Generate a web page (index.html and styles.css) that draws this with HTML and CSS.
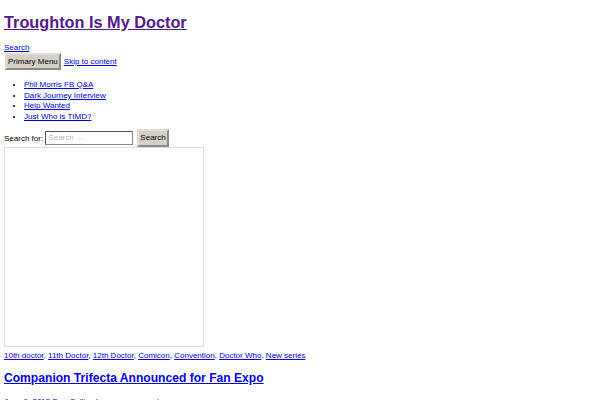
FILE: index.html
```html
<!DOCTYPE html>
<html lang="en">
<head>
    <meta charset="UTF-8">
    <meta name="viewport" content="width=device-width, initial-scale=1.0">
    <title>Troughton Is My Doctor</title>
    <link rel="stylesheet" href="styles.css">
</head>
<body>
    <div class="site">
        <header class="site-header">
            <h1 class="site-title"><a href="#" class="visited">Troughton Is My Doctor</a></h1>
            <div class="search-toggle"><a href="#">Search</a></div>
            <nav class="primary-nav">
                <div class="nav-bar">
                    <button class="menu-toggle">Primary Menu</button>
                    <a href="#" class="skip-link">Skip to content</a>
                </div>
                <ul class="nav-menu">
                    <li><a href="#">Phil Morris FB Q&amp;A</a></li>
                    <li><a href="#">Dark Journey Interview</a></li>
                    <li><a href="#">Help Wanted</a></li>
                    <li><a href="#">Just Who is TIMD?</a></li>
                </ul>
            </nav>
            <form class="search-form">
                <label>Search for: <input type="search" class="search-field" placeholder="Search …"></label>
                <button type="button" class="search-submit">Search</button>
            </form>
        </header>

        <div class="embed-frame"></div>

        <article class="post">
            <div class="tags">
                <a href="#">10th doctor</a>, <a href="#">11th Doctor</a>, <a href="#">12th Doctor</a>, <a href="#">Comicon</a>, <a href="#">Convention</a>, <a href="#">Doctor Who</a>, <a href="#">New series</a>
            </div>
            <h2 class="entry-title"><a href="#">Companion Trifecta Announced for Fan Expo</a></h2>
            <div class="entry-meta">
                <a href="#">June 9, 2015</a> <a href="#">Dan Collins</a> <a href="#">Leave a comment</a>
            </div>
        </article>
    </div>
</body>
</html>
```

FILE: styles.css
```css
body {margin: 4px; font-family: "Liberation Sans", Arial, sans-serif; font-size: 8px; color: #000; background: #fff;}
a {color: #0000ee;}
a.visited {color: #551a8b;}

.site-title {font-size: 16.3px; margin: 8.7px 0 10.7px;}
.search-toggle {line-height: 9.2px; margin-top: 11px;}

.nav-bar {display: flex; align-items: center; gap: 3px; margin-top: 1px;}
.menu-toggle {font-family: inherit; font-size: 8px; height: 17px; padding: 0 1px; margin-left: 1px; background: #d4d0c8; border: 2px outset #e0ddd6; color: #000;}
.nav-menu {margin: 10px 0 6px; padding-left: 20px; line-height: 10.7px;}

.search-form {display: flex; align-items: center; gap: 4px; margin-top: 6px;}
.search-field {box-sizing: border-box; font-family: inherit; font-size: 8px; width: 88px; height: 14px; padding: 1px 2px; border: 1px solid #888; border-top-color: #555; border-left-color: #555;}
.search-field::placeholder {color: #bbb;}
.search-submit {font-family: inherit; font-size: 8px; height: 18px; padding: 0 1px; background: #d4d0c8; border: 2px outset #e0ddd6; color: #000;}

.embed-frame {width: 198px; height: 198px; border: 1px solid #ddd;}

.tags {margin-top: 4px; line-height: 10px;}
.entry-title {font-size: 12.1px; margin: 10px 0 0;}
.entry-meta {margin-top: 12px; color: #666;}
```
